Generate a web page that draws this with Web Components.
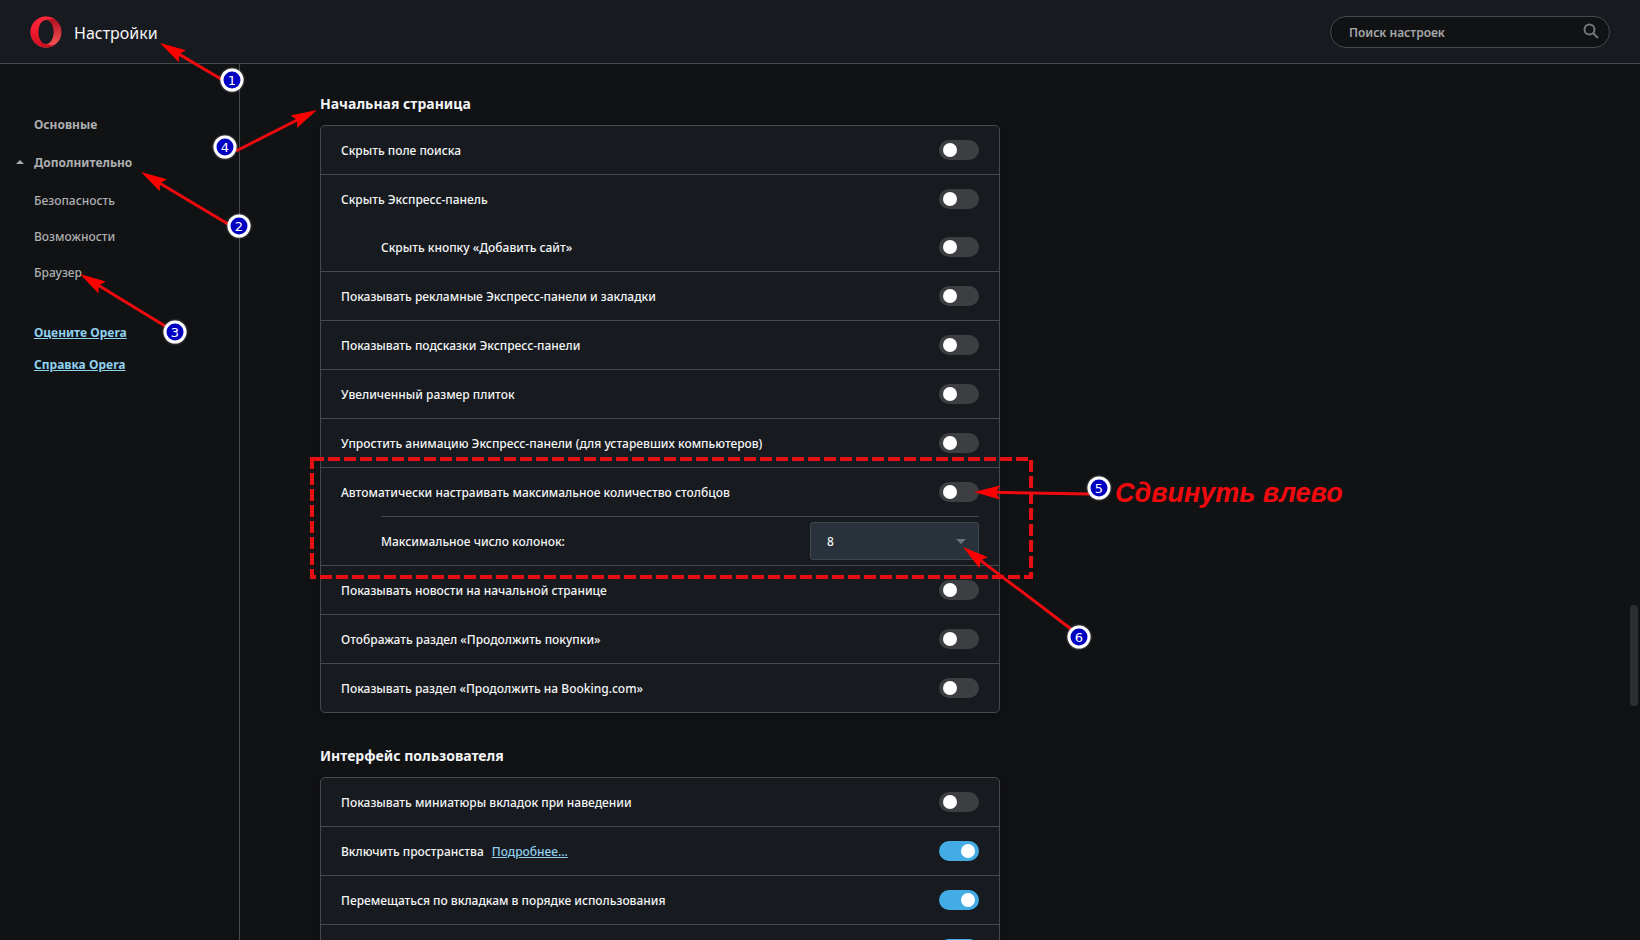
<!DOCTYPE html>
<html lang="ru">
<head>
<meta charset="utf-8">
<title>Настройки</title>
<style>
  html, body { margin: 0; height: 100%; background: #111214; }
  body { overflow: hidden; font: 500 12px/20px "Noto Sans", "Open Sans", sans-serif; color: #f4f5f6; }
</style>
</head>
<body>
<settings-page>
  <settings-header slot="header">Настройки</settings-header>
  <settings-nav slot="nav"></settings-nav>
  <settings-section heading="Начальная страница">
    <settings-row>Скрыть поле поиска</settings-row>
    <settings-row joined>Скрыть Экспресс-панель</settings-row>
    <settings-row nested>Скрыть кнопку «Добавить сайт»</settings-row>
    <settings-row>Показывать рекламные Экспресс-панели и закладки</settings-row>
    <settings-row>Показывать подсказки Экспресс-панели</settings-row>
    <settings-row>Увеличенный размер плиток</settings-row>
    <settings-row>Упростить анимацию Экспресс-панели (для устаревших компьютеров)</settings-row>
    <settings-row joined>Автоматически настраивать максимальное количество столбцов</settings-row>
    <settings-choice>Максимальное число колонок:</settings-choice>
    <settings-row>Показывать новости на начальной странице</settings-row>
    <settings-row>Отображать раздел «Продолжить покупки»</settings-row>
    <settings-row joined>Показывать раздел «Продолжить на Booking.com»</settings-row>
  </settings-section>
  <settings-section heading="Интерфейс пользователя">
    <settings-row>Показывать миниатюры вкладок при наведении</settings-row>
    <settings-row checked>Включить пространства<text-link slot="more">Подробнее...</text-link></settings-row>
    <settings-row checked>Перемещаться по вкладкам в порядке использования</settings-row>
    <settings-row checked></settings-row>
  </settings-section>
  <guide-overlay slot="overlay"></guide-overlay>
</settings-page>

<script>
const define = (name, html, setup) => customElements.define(name, class extends HTMLElement {
  constructor() {
    super();
    this.attachShadow({ mode: 'open' }).innerHTML = html;
  }
  connectedCallback() { if (setup) setup(this, this.shadowRoot); }
});

define('settings-page', `
<style>
  :host { display: flex; flex-direction: column; height: 100vh; position: relative; overflow: hidden; }
  .body { flex: 1; display: flex; min-height: 0; }
  main { flex: 1; min-width: 0; overflow: hidden; padding: 29px 80px 0; display: flex; flex-direction: column; gap: 32px; }
  .thumb { position: absolute; right: 2px; top: 605px; width: 8px; height: 101px; border-radius: 4px; background: #2d2e30; }
</style>
<slot name="header"></slot>
<div class="body"><slot name="nav"></slot><main><slot></slot></main></div>
<div class="thumb"></div>
<slot name="overlay"></slot>`);

define('settings-header', `
<style>
  :host { display: block; background: #171a1f; border-bottom: 1px solid #45484c; }
  header { display: flex; align-items: center; height: 63px; padding: 0 30px; }
  svg { display: block; }
  h1 { flex: 1; margin: 0 0 0 12px; padding-top: 2px; font-size: 16px; line-height: 24px; font-weight: 400; }
  form { position: relative; width: 280px; }
  input { box-sizing: border-box; width: 100%; height: 32px; border: 1px solid #45484c; border-radius: 16px;
    background: #111214; color: #f0f1f2; font: inherit; font-weight: 600; padding: 2px 44px 0 18px; outline: none; display: block; }
  input::placeholder { color: #a6a8aa; opacity: 1; }
  button { position: absolute; right: 11px; top: 7px; padding: 0; border: 0; background: none; }
</style>
<header>
  <svg width="32" height="32" viewBox="0 0 32 32" aria-hidden="true">
    <defs>
      <linearGradient id="a" x1="0" y1="0" x2="0" y2="1"><stop offset="0" stop-color="#ff2a3c"/><stop offset=".5" stop-color="#f01a2e"/><stop offset="1" stop-color="#c80f20"/></linearGradient>
      <linearGradient id="b" x1="0" y1="0" x2="0" y2="1"><stop offset="0" stop-color="#a80a1c"/><stop offset="1" stop-color="#ff5a5a"/></linearGradient>
    </defs>
    <circle cx="16" cy="16" r="15.500" fill="url(#b)"/>
    <path fill="url(#a)" d="M16 .5C7.400.5.5 7.400.5 16S7.400 31.500 16 31.500c4 0 7.500-1.500 10.200-3.900c-2 1.300-4.200 1.600-6 1.200C13.500 28.600 8.500 23 8.500 16S13.500 3.400 20.200 3.200c1.800-.3 4 0 6 1.200C23.500 2 20 .5 16 .5z"/>
    <ellipse cx="16" cy="16" rx="7.700" ry="12" fill="#171a1f"/>
  </svg>
  <h1><slot></slot></h1>
  <form role="search">
    <input type="text" placeholder="Поиск настроек" aria-label="Поиск настроек">
    <button type="button" aria-label="Найти"><svg width="16" height="16" viewBox="0 0 16 16" fill="none" stroke="#74767a" stroke-width="2"><circle cx="6.500" cy="6.500" r="5"/><path d="M10.200 10.200L15 15"/></svg></button>
  </form>
</header>`);

define('settings-nav', `
<style>
  :host { display: block; flex: none; box-sizing: border-box; width: 240px; border-right: 1px solid #45484c; padding: 42px 16px 0 34px; }
  ul { list-style: none; margin: 0; padding: 0; }
  .top > li { font-weight: 700; line-height: 38px; }
  .sub > li { font-weight: 500; line-height: 36px; }
  .sub { padding-top: 1px; }
  a { color: #adafb1; text-decoration: none; }
  .open { position: relative; }
  .open::before { content: ""; position: absolute; left: -18px; top: 6px; border: 4px solid transparent; border-top: 0; border-bottom-color: #a9abad; }
  .links { margin-top: 26px; }
  .links li { line-height: 32px; }
  .links a { font-weight: 700; color: #8fd0ee; text-decoration: underline; }
</style>
<nav>
  <ul class="top">
    <li><a href="#basic">Основные</a></li>
    <li><a class="open" href="#advanced">Дополнительно</a>
      <ul class="sub">
        <li><a href="#security">Безопасность</a></li>
        <li><a href="#features">Возможности</a></li>
        <li><a href="#browser">Браузер</a></li>
      </ul></li>
  </ul>
  <ul class="links">
    <li><a href="#rate">Оцените Opera</a></li>
    <li><a href="#help">Справка Opera</a></li>
  </ul>
</nav>`);

define('settings-section', `
<style>
  :host { display: block; flex: none; max-width: 680px; }
  h2 { margin: 0 0 10px; font-size: 14px; line-height: 22px; font-weight: 700; }
  .card { border: 1px solid #45484c; border-radius: 5px; background: #171b20; overflow: hidden; box-shadow: 0 2px 8px #0004; }
</style>
<section><h2></h2><div class="card"><slot></slot></div></section>`,
(host, root) => { root.querySelector('h2').textContent = host.getAttribute('heading'); });

define('settings-row', `
<style>
  :host { display: block; border-bottom: 1px solid #45484c; }
  :host([joined]) { border-bottom: 0; }
  .row { display: flex; align-items: center; height: 48px; padding: 0 20px; }
  :host([nested]) .row { padding-left: 60px; }
  .text { flex: 1; display: flex; gap: 8px; padding-top: 2px; }
  input { appearance: none; flex: none; margin: 0; width: 40px; height: 20px; border-radius: 10px; background: #3c3e41; padding: 3px 4px; box-sizing: border-box; }
  input::before { content: ""; display: block; width: 14px; height: 14px; border-radius: 50%; background: #fff; }
  input:checked { background: #43ace5; }
  input:checked::before { margin-left: auto; }
</style>
<div class="row">
  <div class="text"><label for="switch"><slot></slot></label><slot name="more"></slot></div>
  <input id="switch" type="checkbox" role="switch">
</div>`,
(host, root) => { root.querySelector('input').checked = host.hasAttribute('checked'); });

define('settings-choice', `
<style>
  :host { display: block; border-bottom: 1px solid #45484c; padding: 0 20px 0 60px; }
  .row { display: flex; align-items: center; height: 48px; border-top: 1px solid #45484c; }
  label { flex: 1; padding-top: 2px; }
  .box { position: relative; width: 169px; }
  select { appearance: none; display: block; box-sizing: border-box; width: 100%; height: 38px; padding: 2px 32px 0 16px; border: 1px solid #40484f; border-radius: 3px; background: #29323a; color: #f0f1f2; font: inherit; }
  .box::after { content: ""; position: absolute; right: 13px; top: 17px; border: 5px solid transparent; border-bottom: 0; border-top-color: #6c7379; pointer-events: none; }
</style>
<div class="row"><label for="columns"><slot></slot></label><div class="box"><select id="columns"><option>8</option></select></div></div>`);

define('text-link', `
<style>
  :host { display: inline; }
  a { color: #8fd0ee; text-decoration: underline; }
</style>
<a href="#more"><slot></slot></a>`);

define('guide-overlay', `
<style>
  :host { position: absolute; inset: 0; pointer-events: none; }
  svg { display: block; width: 100%; height: 100%; }
  .frame { fill: none; stroke: #e60f14; stroke-width: 4; stroke-dasharray: 12 4; }
  .arrow path { fill: #fe0000; }
  .arrow line { stroke: #ee0a0e; stroke-width: 3; }
  .mark circle { fill: #0000c0; stroke: #fff; stroke-width: 3; filter: drop-shadow(0 0 1px #fff8); }
  .mark text { fill: #fff; font: 13px "DejaVu Sans", sans-serif; text-anchor: middle; }
  .note { fill: #f00a0e; font: italic 700 27px "Liberation Sans", Arial, sans-serif; }
</style>
<svg><rect class="frame" x="312" y="459" width="719" height="118"/><text class="note" x="1115" y="502">Сдвинуть влево</text></svg>`,
(host, root) => {
  const svg = root.querySelector('svg');
  const steps = [
    { n: 1, at: [232, 80], tip: [160, 43], tail: [221, 79] },
    { n: 2, at: [239, 226], tip: [141, 172], tail: [228, 224] },
    { n: 3, at: [175, 332], tip: [80, 274], tail: [165, 326] },
    { n: 4, at: [225, 147], tip: [317, 110], tail: [236, 151] },
    { n: 5, at: [1099, 488], tip: [974, 492], tail: [1089, 494] },
    { n: 6, at: [1079, 637], tip: [963, 547], tail: [1071, 629] }
  ];
  svg.insertAdjacentHTML('beforeend', steps.map(({ n, at, tip, tail }) => {
    const angle = Math.atan2(tip[1] - tail[1], tip[0] - tail[0]) * 180 / Math.PI;
    const length = Math.hypot(tip[0] - tail[0], tip[1] - tail[1]);
    return `<g class="arrow" transform="translate(${tip}) rotate(${angle})"><line x1="${-length}" x2="-20"/><path d="M0 0L-26 -7L-22 0L-26 7Z"/></g>
      <g class="mark" transform="translate(${at})"><circle r="10"/><text y="5">${n}</text></g>`;
  }).join(''));
});
</script>
</body>
</html>
